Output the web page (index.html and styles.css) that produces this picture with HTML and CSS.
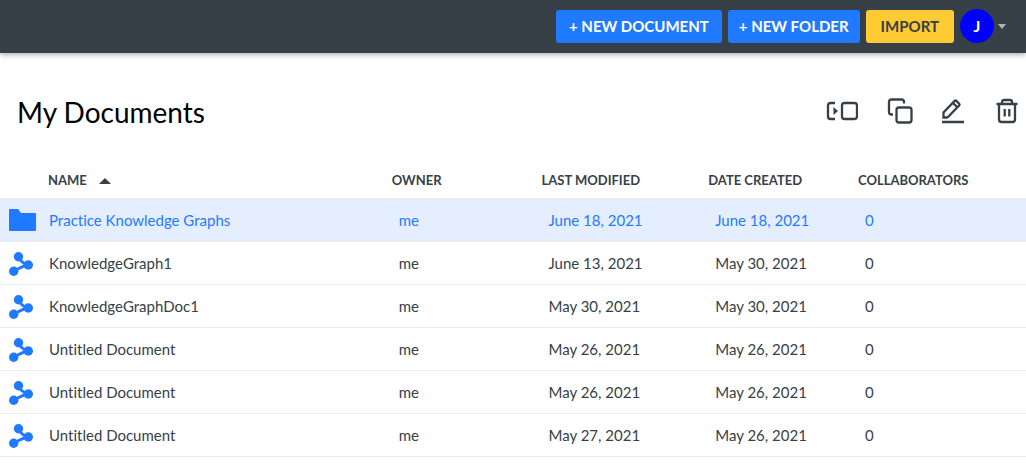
FILE: index.html
```html
<!DOCTYPE html>
<html lang="en">
<head>
<meta charset="utf-8">
<title>My Documents</title>
<link rel="stylesheet" href="styles.css">
</head>
<body>
<svg class="sprite" aria-hidden="true">
  <symbol id="graph" viewBox="0 0 24 26">
    <path d="M9.500 7C12 12 14 13 19.300 15C13 16 11 18 4.700 21" fill="none" stroke="currentColor" stroke-width="2.800"/>
    <circle cx="9.500" cy="6.700" r="4.700"/><circle cx="19.300" cy="15" r="4.700"/><circle cx="4.700" cy="21.200" r="4.700"/>
  </symbol>
</svg>
<header class="topbar">
  <button class="btn" type="button">+ NEW DOCUMENT</button>
  <button class="btn" type="button">+ NEW FOLDER</button>
  <button class="btn btn-import" type="button">IMPORT</button>
  <button class="account" type="button" aria-label="Account menu"><span class="avatar">J</span><span class="caret"></span></button>
</header>
<main>
  <div class="heading">
    <h1>My Documents</h1>
    <div class="tools">
      <button class="tool" type="button" aria-label="Move"><svg width="32" height="26" viewBox="0 0 32 26"><path d="M9 5H4.500Q2 5 2 7.500V18.500Q2 21 4.500 21H9" class="line"/><path d="M7.500 9L12 13L7.500 17Z"/><rect x="16" y="5" width="15" height="16" rx="2.500" class="line"/></svg></button>
      <button class="tool" type="button" aria-label="Copy"><svg width="26" height="26" viewBox="0 0 26 26"><path d="M6 16.500H4.500Q2 16.500 2 14V4Q2 1.500 4.500 1.500H14.500Q17 1.500 17 4V5.500" class="line"/><rect x="9.500" y="9.500" width="15" height="15" rx="2.500" class="line"/></svg></button>
      <button class="tool" type="button" aria-label="Rename"><svg width="24" height="26" viewBox="0 0 24 26"><path d="M1.500 19.500V14.500L12.700 2.900Q13.500 2.100 14.300 2.900L17.200 5.800Q18 6.600 17.200 7.400L6 19Q5.500 19.500 4.800 19.500ZM11 5L15 9M0 24H22" class="line"/></svg></button>
      <button class="tool" type="button" aria-label="Delete"><svg width="24" height="26" viewBox="0 0 24 26"><path d="M1.500 6H22.500M7 6V4Q7 2 9 2H15Q17 2 17 4V6M4 6V21.500Q4 24 6.500 24H17.500Q20 24 20 21.500V6M9.700 11V18.500M14.300 11V18.500" class="line"/></svg></button>
    </div>
  </div>
  <table>
    <colgroup><col class="c-icon"><col class="c-name"><col class="c-owner"><col class="c-modified"><col class="c-created"><col></colgroup>
    <thead>
      <tr><th></th><th scope="col" aria-sort="ascending">NAME<span class="sort"></span></th><th scope="col">OWNER</th><th scope="col">LAST MODIFIED</th><th scope="col">DATE CREATED</th><th scope="col">COLLABORATORS</th></tr>
    </thead>
    <tbody>
      <tr class="selected"><td class="icon"><svg width="27" height="22" viewBox="0 0 27 22"><path d="M1 0H9L12 4H26Q27 4 27 5V21Q27 22 26 22H1Q0 22 0 21V1Q0 0 1 0Z"/></svg></td><td class="name">Practice Knowledge Graphs</td><td>me</td><td>June 18, 2021</td><td>June 18, 2021</td><td>0</td></tr>
      <tr><td class="icon"><svg width="24" height="26"><use href="#graph"/></svg></td><td class="name">KnowledgeGraph1</td><td>me</td><td>June 13, 2021</td><td>May 30, 2021</td><td>0</td></tr>
      <tr><td class="icon"><svg width="24" height="26"><use href="#graph"/></svg></td><td class="name">KnowledgeGraphDoc1</td><td>me</td><td>May 30, 2021</td><td>May 30, 2021</td><td>0</td></tr>
      <tr><td class="icon"><svg width="24" height="26"><use href="#graph"/></svg></td><td class="name">Untitled Document</td><td>me</td><td>May 26, 2021</td><td>May 26, 2021</td><td>0</td></tr>
      <tr><td class="icon"><svg width="24" height="26"><use href="#graph"/></svg></td><td class="name">Untitled Document</td><td>me</td><td>May 26, 2021</td><td>May 26, 2021</td><td>0</td></tr>
      <tr><td class="icon"><svg width="24" height="26"><use href="#graph"/></svg></td><td class="name">Untitled Document</td><td>me</td><td>May 27, 2021</td><td>May 26, 2021</td><td>0</td></tr>
    </tbody>
  </table>
</main>
</body>
</html>
```
FILE: styles.css
```css
* { box-sizing: border-box; }
body { margin: 0; background: #fff; color: #373f47; font: 15px/20px Lato, sans-serif; font-variant-ligatures: none; }
button { font-family: inherit; border: 0; cursor: pointer; }
.sprite { display: none; }
.topbar { display: flex; justify-content: flex-end; align-items: center; gap: 6px; padding: 9px 20px 10px; background: #373f47; box-shadow: 0 1px 6px rgba(0, 0, 0, .4); }
.btn { height: 33px; padding: 0 13px; border-radius: 3px; background: #1f7aff; color: #fff; font-size: 15px; font-weight: 700; line-height: 20px; white-space: nowrap; }
.btn + .btn { padding: 0 11px; }
.btn + .btn-import { padding: 0 15px; background: #ffcb33; color: #373f47; }
.account { display: flex; align-items: center; gap: 4px; padding: 0; background: none; }
.avatar { width: 34px; height: 34px; border-radius: 50%; background: #00f; color: #fff; font-size: 16px; font-weight: 700; line-height: 34px; text-align: center; }
.caret { border: 4px solid transparent; border-top: 5px solid #b0b5ba; border-bottom: 0; }
.heading { display: flex; justify-content: space-between; align-items: flex-start; padding: 40px 7px 0 17px; }
h1 { margin: 0; color: #000; font-size: 28px; font-weight: 400; line-height: 38px; }
.tools { display: flex; gap: 29px; padding-top: 5px; }
.tool { display: flex; padding: 0; background: none; }
.tool svg { fill: #373f47; }
.tool .line { fill: none; stroke: #373f47; stroke-width: 2.300; }
table { width: 100%; margin-top: 31px; border-collapse: separate; border-spacing: 0; table-layout: fixed; }
.c-icon { width: 48px; }
.c-name { width: 33.500%; }
.c-owner { width: 14.600%; }
.c-modified { width: 16.250%; }
.c-created { width: 14.600%; }
th { height: 37px; padding: 0; border-bottom: 1px solid #ebebeb; font-size: 13px; font-weight: 700; text-align: left; white-space: nowrap; }
.sort { display: inline-block; margin-left: 12px; border: 6px solid transparent; border-top: 0; border-bottom: 6px solid #373f47; vertical-align: 1px; }
td { height: 43px; padding: 0 7px; border-bottom: 1px solid #ebebeb; white-space: nowrap; }
td.name { padding: 0 1px; }
td.icon { padding: 0 0 0 9px; color: #1f7aff; }
td svg { display: block; fill: #1f7aff; }
.selected td { background: #e5eeff; color: #1f7aff; }
```
